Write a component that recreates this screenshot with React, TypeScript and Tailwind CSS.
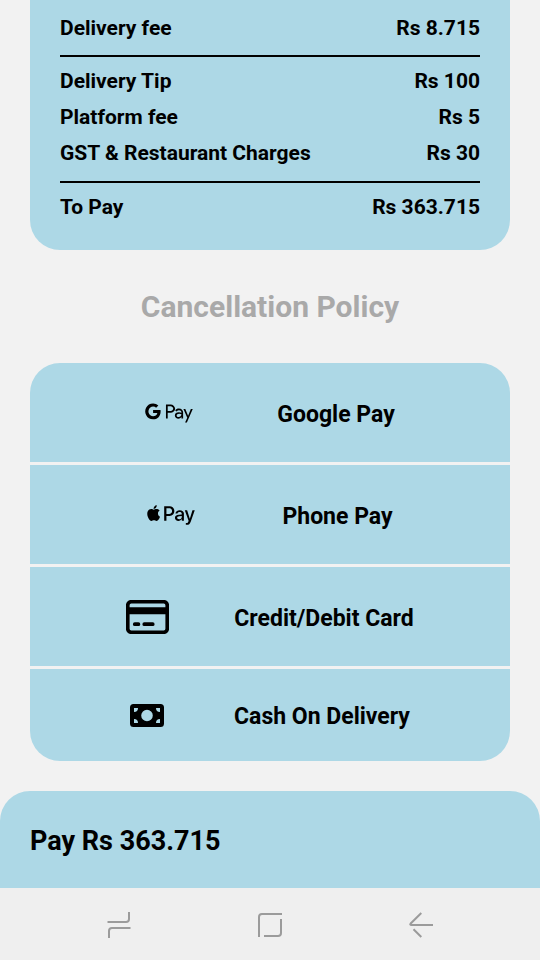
import type { ReactNode } from 'react';
import { FaApplePay, FaGooglePay } from 'react-icons/fa';

type Method = {
  label: string;
  icon: ReactNode;
  gap: string;
  height: string;
};

function CardIcon() {
  return (
    <svg viewBox="0 0 43 34" className="h-[34px] w-[43px]" aria-hidden="true">
      <rect x="1.75" y="1.75" width="39.5" height="30.5" rx="3.5" fill="none" stroke="black" strokeWidth="3.7" />
      <path d="M2 7.2h39v7H2z" />
      <path d="M8.8 24.2h3.6M18.3 24.2h8.4" stroke="black" strokeWidth="3.8" strokeLinecap="round" />
    </svg>
  );
}

function CashIcon() {
  return (
    <svg viewBox="0 0 34 23" className="h-[23px] w-[34px]" aria-hidden="true">
      <path
        fillRule="evenodd"
        d="M3.5 0h27A3.5 3.5 0 0 1 34 3.5v16a3.5 3.5 0 0 1-3.5 3.5h-27A3.5 3.5 0 0 1 0 19.5v-16A3.5 3.5 0 0 1 3.5 0zM17 5.7a5.8 5.8 0 1 0 0 11.6a5.8 5.8 0 1 0 0-11.6zM4 4v4a4 4 0 0 0 4-4zM30 4h-4a4 4 0 0 0 4 4zM4 19h4a4 4 0 0 0-4-4zM30 19v-4a4 4 0 0 0-4 4z"
      />
    </svg>
  );
}

const methods: Method[] = [
  { label: 'Google Pay', icon: <FaGooglePay className="h-[38px] w-12" />, gap: 'gap-[84px]', height: 'h-[99px]' },
  { label: 'Phone Pay', icon: <FaApplePay className="h-[38px] w-12" />, gap: 'gap-[87px]', height: 'h-[99px]' },
  { label: 'Credit/Debit Card', icon: <CardIcon />, gap: 'gap-[65px]', height: 'h-[99px]' },
  { label: 'Cash On Delivery', icon: <CashIcon />, gap: 'gap-[70px]', height: 'h-[92px]' },
];

function BillRow({ label, amount }: { label: string; amount: string }) {
  return (
    <div className="flex justify-between leading-7">
      <dt>{label}</dt>
      <dd>{amount}</dd>
    </div>
  );
}

function BillSummary() {
  return (
    <section className="mx-[30px] rounded-b-[30px] bg-[#add8e6] px-[30px] pt-[14px] pb-[29px] text-[21px] font-bold">
      <dl>
        <BillRow label="Delivery fee" amount="Rs 8.715" />
      </dl>
      <dl className="mt-[13px] flex flex-col gap-2 border-y-2 border-black pt-[10px] pb-[14px]">
        <BillRow label="Delivery Tip" amount="Rs 100" />
        <BillRow label="Platform fee" amount="Rs 5" />
        <BillRow label="GST & Restaurant Charges" amount="Rs 30" />
      </dl>
      <dl className="mt-[10px]">
        <BillRow label="To Pay" amount="Rs 363.715" />
      </dl>
    </section>
  );
}

function PaymentMethods() {
  return (
    <section className="mx-[30px] flex flex-col gap-[3px] overflow-hidden rounded-[30px]">
      {methods.map((method) => (
        <button
          key={method.label}
          type="button"
          className={`flex items-center justify-center bg-[#add8e6] text-[23px] font-bold ${method.height} ${method.gap}`}
        >
          {method.icon}
          <span className="pt-[5px]">{method.label}</span>
        </button>
      ))}
    </section>
  );
}

function SystemNav() {
  return (
    <nav className="flex h-[72px] items-center justify-around bg-[#efefef] px-[43px] pt-0.5 text-[#9b9b9b]">
      <button type="button" aria-label="Recent apps">
        <svg viewBox="0 0 24 26" className="h-[26px] w-6" fill="none" stroke="currentColor" strokeWidth="2" aria-hidden="true">
          <path d="M0.5 10H19a3 3 0 0 0 3-3V0M23.5 16H5a3 3 0 0 0-3 3v7" />
        </svg>
      </button>
      <button type="button" aria-label="Home">
        <svg viewBox="0 0 24 24" className="size-6" fill="none" stroke="currentColor" strokeWidth="2" aria-hidden="true">
          <path d="M1 24V4a3 3 0 0 1 3-3h20M23 6v14a3 3 0 0 1-3 3H6" />
        </svg>
      </button>
      <button type="button" aria-label="Back">
        <svg viewBox="0 0 24 26" className="h-[26px] w-6" fill="none" stroke="currentColor" strokeWidth="2" aria-hidden="true">
          <path d="M12.3 1L1.7 11.5Q0.5 13 2.5 13H24M4.5 17.2L12.3 25" />
        </svg>
      </button>
    </nav>
  );
}

export default function App() {
  return (
    <div className="flex min-h-screen flex-col bg-[#f2f2f2] font-['Roboto',sans-serif] text-black">
      <main>
        <BillSummary />
        <h2 className="py-[37px] text-center text-[30px] leading-[39px] font-bold text-[#a9a9a9]">
          Cancellation Policy
        </h2>
        <PaymentMethods />
      </main>
      <footer className="mt-auto">
        <button
          type="button"
          className="block h-[97px] w-full rounded-t-[30px] bg-[#add8e6] px-[30px] pt-1 text-left text-[27px] font-bold"
        >
          Pay Rs 363.715
        </button>
        <SystemNav />
      </footer>
    </div>
  );
}
